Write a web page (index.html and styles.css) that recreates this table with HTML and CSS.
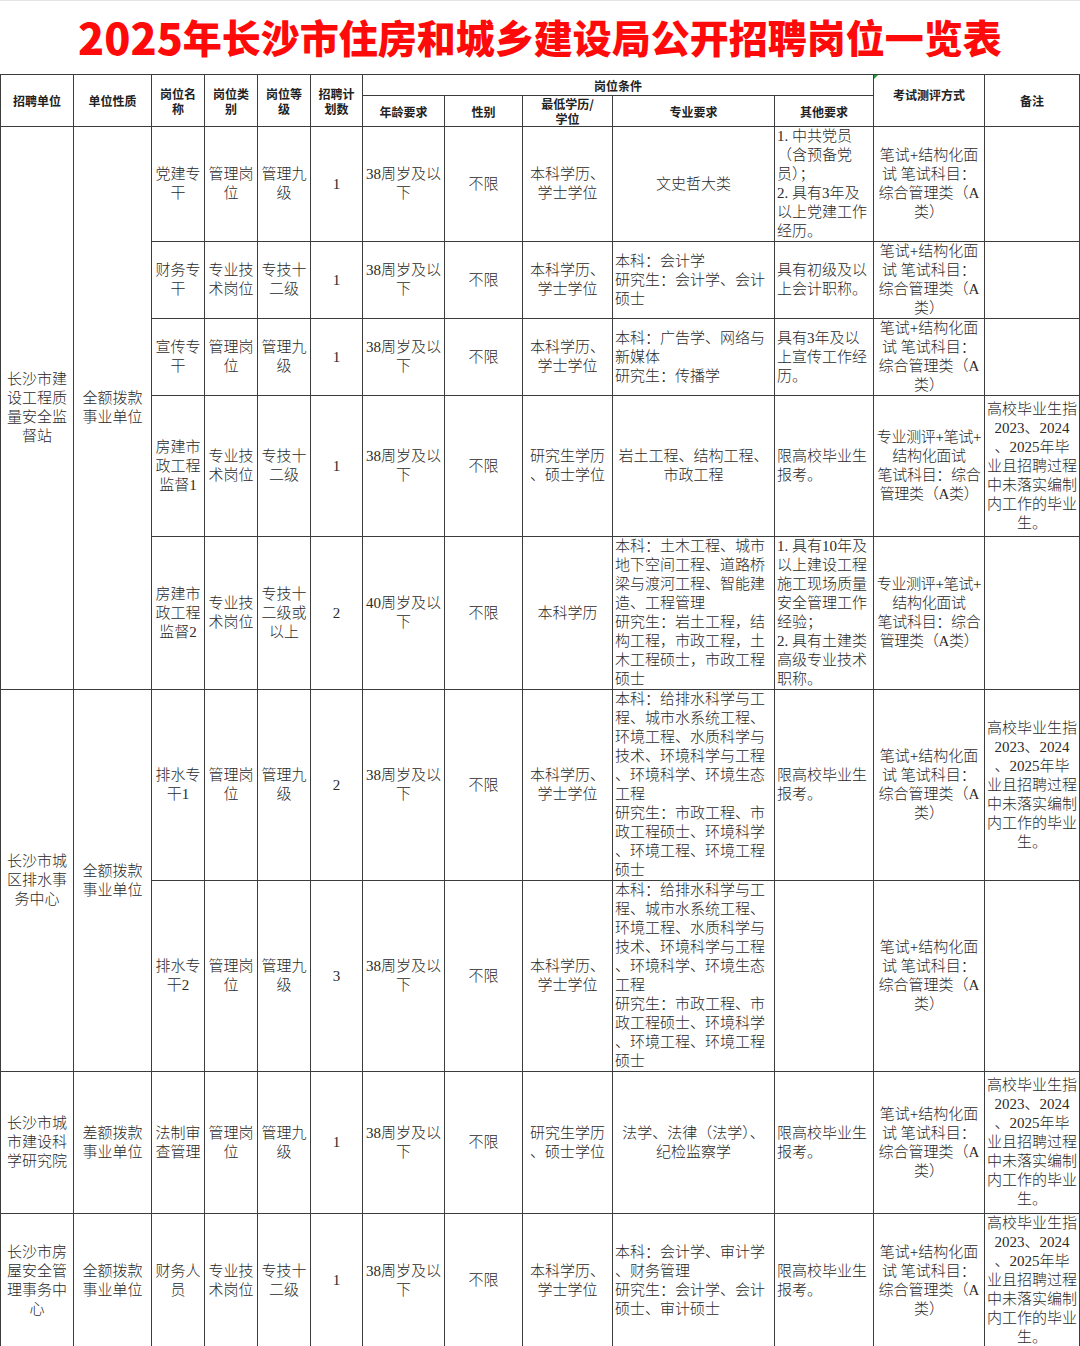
FILE: index.html
```html
<!DOCTYPE html>
<html lang="zh-CN">
<head>
<meta charset="utf-8">
<title>2025年长沙市住房和城乡建设局公开招聘岗位一览表</title>
<link rel="stylesheet" href="styles.css">
</head>
<body>
<div class="page">
  <h1 class="title"><span class="yr">2025</span>年长沙市住房和城乡建设局公开招聘岗位一览表</h1>
  <table class="grid">
    <colgroup>
      <col class="c-unit"><col class="c-nature"><col class="c-post"><col class="c-type"><col class="c-grade"><col class="c-num">
      <col class="c-age"><col class="c-sex"><col class="c-edu"><col class="c-major"><col class="c-other"><col class="c-exam"><col class="c-note">
    </colgroup>
    <thead>
      <tr class="h1">
        <th rowspan="2">招聘单位</th>
        <th rowspan="2">单位性质</th>
        <th rowspan="2">岗位名<br>称</th>
        <th rowspan="2">岗位类<br>别</th>
        <th rowspan="2">岗位等<br>级</th>
        <th rowspan="2">招聘计<br>划数</th>
        <th colspan="5" class="cond">岗位条件</th>
        <th rowspan="2" class="exam-h"><span class="mark"></span>考试测评方式</th>
        <th rowspan="2">备注</th>
      </tr>
      <tr class="h2">
        <th>年龄要求</th>
        <th>性别</th>
        <th>最低学历/<br>学位</th>
        <th>专业要求</th>
        <th>其他要求</th>
      </tr>
    </thead>
    <tbody>
      <tr class="r1">
        <td rowspan="5">长沙市建<br>设工程质<br>量安全监<br>督站</td>
        <td rowspan="5">全额拨款<br>事业单位</td>
        <td>党建专<br>干</td>
        <td>管理岗<br>位</td>
        <td>管理九<br>级</td>
        <td>1</td>
        <td>38周岁及以<br>下</td>
        <td>不限</td>
        <td>本科学历、<br>学士学位</td>
        <td>文史哲大类</td>
        <td class="left">1. 中共党员<br>（含预备党<br>员）；<br>2. 具有3年及<br>以上党建工作<br>经历。</td>
        <td>笔试+结构化面<br>试 笔试科目：<br>综合管理类（A<br>类）</td>
        <td></td>
      </tr>
      <tr class="r2">
        <td>财务专<br>干</td>
        <td>专业技<br>术岗位</td>
        <td>专技十<br>二级</td>
        <td>1</td>
        <td>38周岁及以<br>下</td>
        <td>不限</td>
        <td>本科学历、<br>学士学位</td>
        <td class="left">本科：会计学<br>研究生：会计学、会计<br>硕士</td>
        <td class="left">具有初级及以<br>上会计职称。</td>
        <td>笔试+结构化面<br>试 笔试科目：<br>综合管理类（A<br>类）</td>
        <td></td>
      </tr>
      <tr class="r3">
        <td>宣传专<br>干</td>
        <td>管理岗<br>位</td>
        <td>管理九<br>级</td>
        <td>1</td>
        <td>38周岁及以<br>下</td>
        <td>不限</td>
        <td>本科学历、<br>学士学位</td>
        <td class="left">本科：广告学、网络与<br>新媒体<br>研究生：传播学</td>
        <td class="left">具有3年及以<br>上宣传工作经<br>历。</td>
        <td>笔试+结构化面<br>试 笔试科目：<br>综合管理类（A<br>类）</td>
        <td></td>
      </tr>
      <tr class="r4">
        <td>房建市<br>政工程<br>监督1</td>
        <td>专业技<br>术岗位</td>
        <td>专技十<br>二级</td>
        <td>1</td>
        <td>38周岁及以<br>下</td>
        <td>不限</td>
        <td>研究生学历<br>、硕士学位</td>
        <td>岩土工程、结构工程、<br>市政工程</td>
        <td class="left">限高校毕业生<br>报考。</td>
        <td class="tight">专业测评+笔试+<br>结构化面试<br>笔试科目：综合<br>管理类（A类）</td>
        <td>高校毕业生指<br>2023、2024<br>、2025年毕<br>业且招聘过程<br>中未落实编制<br>内工作的毕业<br>生。</td>
      </tr>
      <tr class="r5">
        <td>房建市<br>政工程<br>监督2</td>
        <td>专业技<br>术岗位</td>
        <td>专技十<br>二级或<br>以上</td>
        <td>2</td>
        <td>40周岁及以<br>下</td>
        <td>不限</td>
        <td>本科学历</td>
        <td class="left">本科：土木工程、城市<br>地下空间工程、道路桥<br>梁与渡河工程、智能建<br>造、工程管理<br>研究生：岩土工程，结<br>构工程，市政工程，土<br>木工程硕士，市政工程<br>硕士</td>
        <td class="left">1. 具有10年及<br>以上建设工程<br>施工现场质量<br>安全管理工作<br>经验；<br>2. 具有土建类<br>高级专业技术<br>职称。</td>
        <td class="tight">专业测评+笔试+<br>结构化面试<br>笔试科目：综合<br>管理类（A类）</td>
        <td></td>
      </tr>
      <tr class="r6">
        <td rowspan="2">长沙市城<br>区排水事<br>务中心</td>
        <td rowspan="2">全额拨款<br>事业单位</td>
        <td>排水专<br>干1</td>
        <td>管理岗<br>位</td>
        <td>管理九<br>级</td>
        <td>2</td>
        <td>38周岁及以<br>下</td>
        <td>不限</td>
        <td>本科学历、<br>学士学位</td>
        <td class="left">本科：给排水科学与工<br>程、城市水系统工程、<br>环境工程、水质科学与<br>技术、环境科学与工程<br>、环境科学、环境生态<br>工程<br>研究生：市政工程、市<br>政工程硕士、环境科学<br>、环境工程、环境工程<br>硕士</td>
        <td class="left">限高校毕业生<br>报考。</td>
        <td>笔试+结构化面<br>试 笔试科目：<br>综合管理类（A<br>类）</td>
        <td>高校毕业生指<br>2023、2024<br>、2025年毕<br>业且招聘过程<br>中未落实编制<br>内工作的毕业<br>生。</td>
      </tr>
      <tr class="r7">
        <td>排水专<br>干2</td>
        <td>管理岗<br>位</td>
        <td>管理九<br>级</td>
        <td>3</td>
        <td>38周岁及以<br>下</td>
        <td>不限</td>
        <td>本科学历、<br>学士学位</td>
        <td class="left">本科：给排水科学与工<br>程、城市水系统工程、<br>环境工程、水质科学与<br>技术、环境科学与工程<br>、环境科学、环境生态<br>工程<br>研究生：市政工程、市<br>政工程硕士、环境科学<br>、环境工程、环境工程<br>硕士</td>
        <td></td>
        <td>笔试+结构化面<br>试 笔试科目：<br>综合管理类（A<br>类）</td>
        <td></td>
      </tr>
      <tr class="r8">
        <td>长沙市城<br>市建设科<br>学研究院</td>
        <td>差额拨款<br>事业单位</td>
        <td>法制审<br>查管理</td>
        <td>管理岗<br>位</td>
        <td>管理九<br>级</td>
        <td>1</td>
        <td>38周岁及以<br>下</td>
        <td>不限</td>
        <td>研究生学历<br>、硕士学位</td>
        <td>法学、法律（法学）、<br>纪检监察学</td>
        <td class="left">限高校毕业生<br>报考。</td>
        <td>笔试+结构化面<br>试 笔试科目：<br>综合管理类（A<br>类）</td>
        <td>高校毕业生指<br>2023、2024<br>、2025年毕<br>业且招聘过程<br>中未落实编制<br>内工作的毕业<br>生。</td>
      </tr>
      <tr class="r9">
        <td>长沙市房<br>屋安全管<br>理事务中<br>心</td>
        <td>全额拨款<br>事业单位</td>
        <td>财务人<br>员</td>
        <td>专业技<br>术岗位</td>
        <td>专技十<br>二级</td>
        <td>1</td>
        <td>38周岁及以<br>下</td>
        <td>不限</td>
        <td>本科学历、<br>学士学位</td>
        <td class="left">本科：会计学、审计学<br>、财务管理<br>研究生：会计学、会计<br>硕士、审计硕士</td>
        <td class="left">限高校毕业生<br>报考。</td>
        <td>笔试+结构化面<br>试 笔试科目：<br>综合管理类（A<br>类）</td>
        <td>高校毕业生指<br>2023、2024<br>、2025年毕<br>业且招聘过程<br>中未落实编制<br>内工作的毕业<br>生。</td>
      </tr>
    </tbody>
  </table>
</div>
</body>
</html>
```

FILE: styles.css
```css
* { box-sizing: border-box; }
html, body { margin: 0; padding: 0; background: #ffffff; }
.page {
  width: 1080px;
  border-top: 1px solid #e4e4e4;
}
.title {
  margin: 0;
  height: 73px;
  display: flex;
  align-items: center;
  justify-content: center;
  padding-bottom: 3px;
  color: #ff0a0a;
  font-family: "Noto Sans CJK SC", sans-serif;
  font-weight: 900;
  font-size: 39px;
  letter-spacing: 0;
  line-height: 1;
  white-space: nowrap;
}
.title .yr { font-size: 43px; }
.grid {
  width: 1079px;
  table-layout: fixed;
  border-collapse: collapse;
  font-family: "Liberation Serif", "Noto Sans CJK SC", serif;
  font-size: 15px;
  line-height: 19px;
  color: #2a2a2a;
  font-weight: 300;
}
.c-unit { width: 73px; }
.c-nature { width: 78px; }
.c-post { width: 53px; }
.c-type { width: 53px; }
.c-grade { width: 53px; }
.c-num { width: 52px; }
.c-age { width: 82px; }
.c-sex { width: 78px; }
.c-edu { width: 90px; }
.c-major { width: 162px; }
.c-other { width: 99px; }
.c-exam { width: 111px; }
.c-note { width: 95px; }
.grid th, .grid td {
  border: 1px solid #3c3c3c;
  padding: 0 1px;
  text-align: center;
  vertical-align: middle;
  white-space: nowrap;
  overflow: hidden;
}
.grid th {
  font-family: "Noto Sans CJK SC", serif;
  font-weight: 700;
  font-size: 12px;
  line-height: 15px;
  color: #222;
}
.grid th.exam-h {
  position: relative;
  vertical-align: top;
  padding-top: 12px;
}
.mark {
  position: absolute;
  top: 0;
  left: 0;
  width: 0;
  height: 0;
  border-top: 4px solid #1f9d3a;
  border-right: 4px solid transparent;
}
.grid td.left { text-align: left; padding-left: 2px; }
.grid td.tight { padding: 0; letter-spacing: -0.3px; }
.h1 { height: 21px; }
.h2 { height: 31px; }
.r1 { height: 115px; }
.r2 { height: 76px; }
.r3 { height: 77px; }
.r4 { height: 141px; }
.r5 { height: 153px; }
.r6 { height: 191px; }
.r7 { height: 191px; }
.r8 { height: 142px; }
.r9 { height: 133px; }
```
